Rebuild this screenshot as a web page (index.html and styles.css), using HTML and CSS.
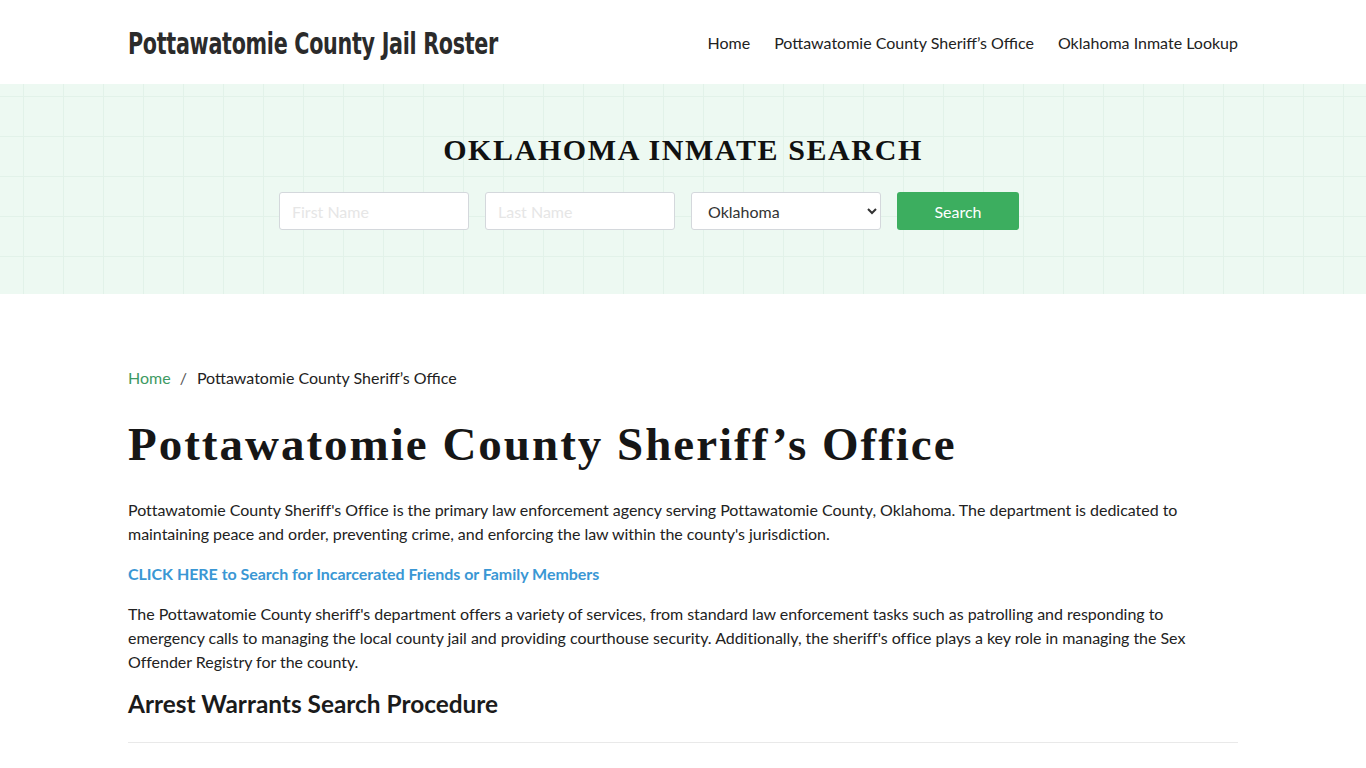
FILE: index.html
```html
<!DOCTYPE html>
<html lang="en">
<head>
<meta charset="utf-8">
<title>Pottawatomie County Sheriff's Office</title>
<link rel="stylesheet" href="styles.css">
</head>
<body>
<header class="site-header">
  <div class="container header-inner">
    <a class="logo" href="#">Pottawatomie County Jail Roster</a>
    <nav class="main-nav">
      <a href="#">Home</a>
      <a href="#">Pottawatomie County Sheriff’s Office</a>
      <a href="#">Oklahoma Inmate Lookup</a>
    </nav>
  </div>
</header>
<section class="hero">
  <h2 class="hero-title">OKLAHOMA INMATE SEARCH</h2>
  <form class="search-form">
    <input type="text" placeholder="First Name">
    <input type="text" placeholder="Last Name">
    <select><option>Oklahoma</option></select>
    <button type="button">Search</button>
  </form>
</section>
<main class="container content">
  <div class="breadcrumb"><a href="#">Home</a><span class="sep">/</span><span>Pottawatomie County Sheriff’s Office</span></div>
  <h1 class="page-title">Pottawatomie County Sheriff’s Office</h1>
  <p>Pottawatomie County Sheriff's Office is the primary law enforcement agency serving Pottawatomie County, Oklahoma. The department is dedicated to maintaining peace and order, preventing crime, and enforcing the law within the county's jurisdiction.</p>
  <p><a class="cta" href="#">CLICK HERE to Search for Incarcerated Friends or Family Members</a></p>
  <p>The Pottawatomie County sheriff's department offers a variety of services, from standard law enforcement tasks such as patrolling and responding to emergency calls to managing the local county jail and providing courthouse security. Additionally, the sheriff's office plays a key role in managing the Sex Offender Registry for the county.</p>
  <h2 class="section-title">Arrest Warrants Search Procedure</h2>
  <hr class="divider">
</main>
</body>
</html>
```
FILE: styles.css
```css
* { box-sizing: border-box; }
body {
  margin: 0;
  font-family: Lato, "Open Sans", sans-serif;
  color: #222;
  background: #fff;
}
.container {
  width: 1110px;
  margin: 0 auto;
}
.site-header {
  height: 84px;
  background: #fff;
}
.header-inner {
  height: 84px;
  display: flex;
  align-items: center;
  justify-content: space-between;
}
.logo {
  display: inline-block;
  font-family: "DejaVu Sans Condensed", "DejaVu Sans", sans-serif;
  font-stretch: condensed;
  font-weight: bold;
  font-size: 30px;
  letter-spacing: -0.4px;
  color: #2b2b2b;
  text-decoration: none;
  margin-top: 2px;
  transform: scaleX(0.767);
  transform-origin: left center;
  white-space: nowrap;
}
.main-nav {
  display: flex;
  gap: 24px;
}
.main-nav a {
  font-size: 16px;
  color: #222;
  text-decoration: none;
}
.hero {
  height: 210px;
  background-color: #edf9f2;
  background-image:
    linear-gradient(to right, #e2f2e9 1px, transparent 1px),
    linear-gradient(to bottom, #e2f2e9 1px, transparent 1px);
  background-size: 40px 40px;
  background-position: 23px 12px;
  display: flex;
  flex-direction: column;
  align-items: center;
  padding-top: 48px;
}
.hero-title {
  margin: 0;
  font-family: "Liberation Serif", "Times New Roman", serif;
  font-weight: bold;
  font-size: 30px;
  letter-spacing: 1.6px;
  color: #111;
  line-height: 36px;
}
.search-form {
  display: flex;
  gap: 16px;
  margin-top: 24px;
  margin-right: 68px;
}
.search-form input,
.search-form select {
  width: 190px;
  height: 38px;
  border: 1px solid #d4d8dc;
  border-radius: 3px;
  background: #fff;
  font-family: Lato, sans-serif;
  font-size: 16px;
  padding: 0 12px;
  color: #333;
}
.search-form input::placeholder { color: #e6e6e6; }
.search-form select { padding: 0 10px 0 12px; }
.search-form button {
  width: 122px;
  height: 38px;
  border: none;
  border-radius: 3px;
  background: #3cae5f;
  color: #fff;
  font-family: Lato, sans-serif;
  font-size: 16px;
}
.content {
  padding-top: 74px;
}
.breadcrumb {
  font-size: 16px;
  color: #222;
  line-height: 20px;
}
.breadcrumb a { color: #3d9a63; text-decoration: none; }
.breadcrumb .sep { margin: 0 10px 0 9px; color: #555; }
.page-title {
  font-family: "Liberation Serif", "Times New Roman", serif;
  font-weight: bold;
  font-size: 47px;
  letter-spacing: 2px;
  color: #161616;
  margin: 28px 0 26px;
  line-height: 56px;
}
.content p {
  font-size: 16px;
  line-height: 24px;
  letter-spacing: -0.03px;
  margin: 0 0 16px;
  color: #222;
}
.cta {
  color: #3a97d4;
  font-weight: bold;
  text-decoration: none;
}
.section-title {
  font-family: Lato, sans-serif;
  font-weight: bold;
  font-size: 24.4px;
  color: #1b1b1b;
  margin: 0;
  line-height: 28px;
}
.divider {
  border: 0;
  border-top: 1px solid #e9e9e9;
  margin: 24px 0 0;
}
```
